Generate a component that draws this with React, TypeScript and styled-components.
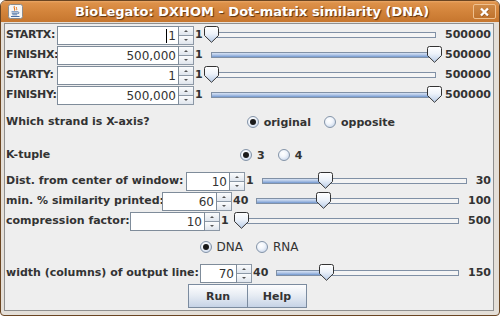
import React from "react";
import styled, { createGlobalStyle } from "styled-components";

const GlobalStyle = createGlobalStyle`
  html, body { margin: 0; padding: 0; }
  body { background: #ffffff; font-family: "DejaVu Sans", "Liberation Sans", sans-serif; }
  * { box-sizing: border-box; }
`;

const Window = styled.div`
  width: 500px;
  height: 316px;
  display: flex;
  flex-direction: column;
  border: 1px solid #6a4522;
  border-radius: 6px 6px 4px 4px;
  overflow: hidden;
  background: #e4dfd8;
`;

const TitleBar = styled.div`
  flex: none;
  height: 21px;
  display: grid;
  grid-template-columns: 1fr auto 1fr;
  align-items: center;
  padding: 0 3px 0 7px;
  background: linear-gradient(to bottom, #eaa766 0px, #dd9149 2px, #d3843b 50%, #c6762e 100%);
`;

const TitleText = styled.div`
  color: #ffffff;
  font: bold 13px "DejaVu Sans", sans-serif;
  text-shadow: 1px 1px 1px #5a3210;
  white-space: nowrap;
`;

const IconSlot = styled.div`
  display: flex;
  justify-content: flex-start;
  align-items: center;
`;

const CloseSlot = styled.div`
  display: flex;
  justify-content: flex-end;
  align-items: center;
`;

const CloseButton = styled.div`
  width: 23px;
  height: 15px;
  border: 1px solid #efc08e;
  border-radius: 2px;
  background: linear-gradient(#cf8a47, #bf722c);
  display: flex;
  align-items: center;
  justify-content: center;
`;

const Frame = styled.div`
  flex: 1;
  display: flex;
  padding: 1px 5px 4px 3px;
`;

const Panel = styled.div`
  flex: 1;
  display: flex;
  flex-direction: column;
  border: 1px solid #8f8f8f;
  background: #eeeeee;
  padding: 1px 1px 0 1px;
`;

const ControlRow = styled.div<{ $labelW: number }>`
  display: grid;
  grid-template-columns: ${(p) => p.$labelW}px auto auto 1fr auto;
  height: 20px;
  align-items: start;
`;

const Label = styled.span<{ $tight?: boolean }>`
  font: bold 11px "DejaVu Sans", sans-serif;
  color: #333333;
  line-height: 20px;
  white-space: nowrap;
  letter-spacing: ${(p) => (p.$tight ? "-0.35px" : "normal")};
`;

const MinLabel = styled(Label)`
  margin-left: 1px;
`;

const MaxLabel = styled(Label)`
  margin-left: 1px;
  padding-right: 1px;
`;

const SpinBox = styled.div`
  display: flex;
  margin-top: 1px;
  height: 19px;
`;

const Field = styled.div<{ $w: number }>`
  width: ${(p) => p.$w}px;
  height: 19px;
  border: 1px solid #7f8c9a;
  background: #ffffff;
  font: 12px "DejaVu Sans", sans-serif;
  color: #333333;
  display: flex;
  align-items: center;
  justify-content: flex-end;
  padding-right: 2px;
  white-space: nowrap;
`;

const Caret = styled.span`
  border-left: 1px solid #000000;
  padding-left: 1px;
  line-height: 14px;
`;

const SpinButtons = styled.div`
  display: flex;
  flex-direction: column;
  width: 15px;
  height: 19px;
`;

const SpinButton = styled.div<{ $down?: boolean }>`
  height: ${(p) => (p.$down ? 9 : 10)}px;
  border: 1px solid #8c98a6;
  border-left: none;
  border-top: ${(p) => (p.$down ? "none" : "1px solid #8c98a6")};
  background: linear-gradient(#fbfcfd, #dfe5ed);
  display: flex;
  align-items: center;
  justify-content: center;
`;

const Arrow = styled.span<{ $down?: boolean }>`
  width: 0;
  height: 0;
  border-left: 2px solid transparent;
  border-right: 2px solid transparent;
  ${(p) => (p.$down ? "border-top: 2px solid #555;" : "border-bottom: 2px solid #555;")}
`;

const SliderBox = styled.div`
  position: relative;
  height: 20px;
  padding: 7px 8px 0;
`;

const Track = styled.div`
  position: relative;
  height: 6px;
  border: 1px solid #8090a5;
  background: #f4f4f4;
`;

const TrackFill = styled.div`
  position: absolute;
  left: 0;
  top: 0;
  bottom: 0;
  background: linear-gradient(#d6e2f4, #aec4e6 50%, #7297cf);
`;

const ThumbWrap = styled.div`
  position: absolute;
  top: -7px;
  width: 15px;
  height: 17px;
  margin-left: -8px;
`;

const ChoiceRow = styled.div<{ $h: number }>`
  display: flex;
  align-items: center;
  height: ${(p) => p.$h}px;
`;

const ChoiceGroup = styled.div`
  flex: 1;
  display: flex;
  justify-content: center;
  gap: 13px;
`;

const RadioItem = styled.span<{ $bold?: boolean }>`
  display: inline-flex;
  align-items: center;
  gap: 5px;
  font: ${(p) => (p.$bold ? "bold 11px" : "12px")} "DejaVu Sans", sans-serif;
  color: #333333;
  white-space: nowrap;
`;

const RadioDot = styled.span<{ $on?: boolean }>`
  width: 12px;
  height: 12px;
  border-radius: 50%;
  border: 1px solid #8494a8;
  background: radial-gradient(circle at 40% 35%, #ffffff 0%, #f1f5fb 40%, #b9cbe5 100%);
  display: inline-flex;
  align-items: center;
  justify-content: center;
  &::after {
    content: "";
    width: 6px;
    height: 6px;
    border-radius: 50%;
    background: #1a1a1a;
    display: ${(p) => (p.$on ? "block" : "none")};
  }
`;

const ButtonRow = styled.div`
  display: flex;
  justify-content: center;
  height: 24px;
  margin-top: 1px;
  padding-right: 3px;
`;

const PushButton = styled.button`
  width: 60px;
  height: 24px;
  padding: 0;
  border: 1px solid #7b8b9f;
  background: linear-gradient(#fdfdfe, #e8edf4 45%, #c6d3e6);
  font: bold 11px "DejaVu Sans", sans-serif;
  color: #333333;
  & + & {
    margin-left: -1px;
  }
`;

function JavaIcon() {
  return (
    <svg width="15" height="15" viewBox="0 0 15 15">
      <rect x="0.5" y="0.5" width="14" height="14" rx="2" fill="#f6f6f6" stroke="#8c8c8c" />
      <path d="M6.5 2.2 C4.8 3.8 8 4.6 6.3 6.6" fill="none" stroke="#e2741b" strokeWidth="1.1" />
      <path d="M8.6 3 C7.6 4.2 9.6 4.8 8.4 6.2" fill="none" stroke="#e2741b" strokeWidth="1" />
      <path d="M3.5 7.8 H10 M3.8 9.3 H9.7 M4.3 10.8 H9.2" stroke="#4a6fa5" strokeWidth="0.9" />
      <path d="M10 7.8 Q12.2 8.4 9.8 10" fill="none" stroke="#4a6fa5" strokeWidth="0.9" />
      <path d="M3 12.5 H11.5" stroke="#4a6fa5" strokeWidth="1" />
    </svg>
  );
}

function CloseIcon() {
  return (
    <svg width="11" height="10" viewBox="0 0 11 10">
      <path d="M2 1.5 L9 8.5 M9 1.5 L2 8.5" stroke="#6b3a12" strokeWidth="2.4" transform="translate(0.6 0.6)" opacity="0.5" />
      <path d="M2 1.5 L9 8.5 M9 1.5 L2 8.5" stroke="#ffffff" strokeWidth="2.4" />
    </svg>
  );
}

function Thumb() {
  return (
    <svg width="15" height="17" viewBox="0 0 15 17">
      <defs>
        <linearGradient id="thumbGrad" x1="0" y1="0" x2="0" y2="1">
          <stop offset="0" stopColor="#ffffff" />
          <stop offset="0.45" stopColor="#eef3fa" />
          <stop offset="1" stopColor="#b8cce8" />
        </linearGradient>
      </defs>
      <path
        d="M0.5 2.5 Q0.5 0.5 2.5 0.5 H12.5 Q14.5 0.5 14.5 2.5 V9.5 L7.5 16.3 L0.5 9.5 Z"
        fill="url(#thumbGrad)"
        stroke="#333333"
      />
    </svg>
  );
}

function Slider({ frac }: { frac: number }) {
  return (
    <SliderBox>
      <Track>
        <TrackFill style={{ width: `${frac * 100}%` }} />
        <ThumbWrap style={{ left: `${frac * 100}%` }}>
          <Thumb />
        </ThumbWrap>
      </Track>
    </SliderBox>
  );
}

type RowSpec = {
  label: string;
  labelW: number;
  fieldW: number;
  value: string;
  caret?: boolean;
  min: string;
  max: string;
  frac: number;
  tight?: boolean;
};

function SpinRow({ label, labelW, fieldW, value, caret, min, max, frac, tight }: RowSpec) {
  return (
    <ControlRow $labelW={labelW}>
      <Label $tight={tight}>{label}</Label>
      <SpinBox>
        <Field $w={fieldW}>{caret ? <Caret>{value}</Caret> : value}</Field>
        <SpinButtons>
          <SpinButton>
            <Arrow />
          </SpinButton>
          <SpinButton $down>
            <Arrow $down />
          </SpinButton>
        </SpinButtons>
      </SpinBox>
      <MinLabel>{min}</MinLabel>
      <Slider frac={frac} />
      <MaxLabel>{max}</MaxLabel>
    </ControlRow>
  );
}

const topRows: RowSpec[] = [
  { label: "STARTX:", labelW: 51, fieldW: 122, value: "1", caret: true, min: "1", max: "500000", frac: 0, tight: true },
  { label: "FINISHX:", labelW: 51, fieldW: 122, value: "500,000", min: "1", max: "500000", frac: 1, tight: true },
  { label: "STARTY:", labelW: 51, fieldW: 122, value: "1", min: "1", max: "500000", frac: 0, tight: true },
  { label: "FINISHY:", labelW: 51, fieldW: 122, value: "500,000", min: "1", max: "500000", frac: 1, tight: true },
];

const midRows: RowSpec[] = [
  { label: "Dist. from center of window:", labelW: 180, fieldW: 44, value: "10", min: "1", max: "30", frac: 9 / 29 },
  { label: "min. % similarity printed:", labelW: 156, fieldW: 55, value: "60", min: "40", max: "100", frac: 20 / 60 },
  { label: "compression factor:", labelW: 124, fieldW: 75, value: "10", min: "1", max: "500", frac: 9 / 499 },
];

const widthRow: RowSpec = {
  label: "width (columns) of output line:",
  labelW: 194,
  fieldW: 37,
  value: "70",
  min: "40",
  max: "150",
  frac: 30 / 110,
};

export default function App() {
  return (
    <>
      <GlobalStyle />
      <Window>
        <TitleBar>
          <IconSlot>
            <JavaIcon />
          </IconSlot>
          <TitleText>BioLegato: DXHOM - Dot-matrix similarity (DNA)</TitleText>
          <CloseSlot>
            <CloseButton>
              <CloseIcon />
            </CloseButton>
          </CloseSlot>
        </TitleBar>
        <Frame>
          <Panel>
            {topRows.map((r) => (
              <SpinRow key={r.label} {...r} />
            ))}
            <ChoiceRow $h={34}>
              <Label>Which strand is X-axis?</Label>
              <ChoiceGroup>
                <RadioItem $bold>
                  <RadioDot $on />
                  original
                </RadioItem>
                <RadioItem $bold>
                  <RadioDot />
                  opposite
                </RadioItem>
              </ChoiceGroup>
            </ChoiceRow>
            <ChoiceRow $h={32}>
              <Label>K-tuple</Label>
              <ChoiceGroup>
                <RadioItem $bold>
                  <RadioDot $on />3
                </RadioItem>
                <RadioItem $bold>
                  <RadioDot />4
                </RadioItem>
              </ChoiceGroup>
            </ChoiceRow>
            {midRows.map((r) => (
              <SpinRow key={r.label} {...r} />
            ))}
            <ChoiceRow $h={32}>
              <ChoiceGroup>
                <RadioItem>
                  <RadioDot $on />
                  DNA
                </RadioItem>
                <RadioItem>
                  <RadioDot />
                  RNA
                </RadioItem>
              </ChoiceGroup>
            </ChoiceRow>
            <SpinRow {...widthRow} />
            <ButtonRow>
              <PushButton>Run</PushButton>
              <PushButton>Help</PushButton>
            </ButtonRow>
          </Panel>
        </Frame>
      </Window>
    </>
  );
}
